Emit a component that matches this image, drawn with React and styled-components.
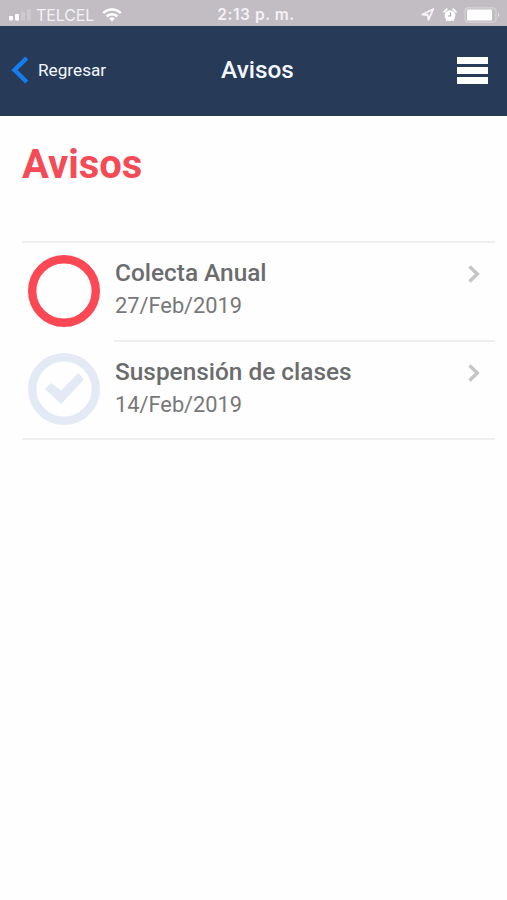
import styled, { createGlobalStyle } from "styled-components";

const GlobalStyle = createGlobalStyle`
  * {
    box-sizing: border-box;
  }
  body {
    margin: 0;
    background-color: #fefefe;
    font-family: Roboto, sans-serif;
  }
  svg {
    display: block;
    flex-shrink: 0;
  }
`;

const Screen = styled.div`
  min-height: 900px;
  background-color: #fefefe;
`;
const StatusBar = styled.div`
  height: 26px;
  padding: 3px 7px 0 9px;
  display: grid;
  grid-template-columns: 1fr auto 1fr;
  align-items: center;
  background-color: #c1bdc3;
  color: #f3f1f5;
  font-family: Inter, sans-serif;
`;
const StatusGroup = styled.div`
  display: flex;
  align-items: center;
  justify-content: ${(props) => (props.$end ? "flex-end" : "flex-start")};
`;
const Carrier = styled.span`
  margin: 0 8px 0 4px;
  font-size: 16px;
  line-height: 20px;
  letter-spacing: -0.1px;
`;
const Clock = styled.span`
  margin-left: 3px;
  font-size: 15.5px;
  line-height: 20px;
  font-weight: 600;
  letter-spacing: 0.55px;
`;
const Header = styled.header`
  height: 90px;
  padding: 0 19px 2px 11px;
  display: grid;
  grid-template-columns: 1fr auto 1fr;
  align-items: center;
  background-color: #273b59;
  color: #f4f9ff;
`;
const BackButton = styled.button`
  padding: 0;
  border: 0;
  display: flex;
  align-items: center;
  gap: 9px;
  background: none;
  color: inherit;
  font-family: inherit;
  font-size: 17.2px;
`;
const HeaderTitle = styled.span`
  margin-left: 16px;
  padding-bottom: 2px;
  font-size: 24.4px;
  font-weight: 500;
`;
const MenuButton = styled.button`
  padding: 0;
  border: 0;
  justify-self: end;
  display: flex;
  flex-direction: column;
  gap: 3px;
  background: none;
`;
const MenuBar = styled.span`
  width: 31px;
  height: 7px;
  background-color: #fff;
`;
const Content = styled.main`
  padding: 25px 12px 0 22px;
`;
const Title = styled.h1`
  margin: 0 0 53px;
  font-size: 40px;
  line-height: 47px;
  font-weight: 700;
  color: #f54b57;
`;
const List = styled.ul`
  margin: 0;
  padding: 0;
  list-style: none;
  border-top: 2px solid #efeff0;
  border-bottom: 2px solid #efeff0;
`;
const Item = styled.li`
  display: flex;
  padding-left: 6px;
`;
const StatusIcon = styled.svg`
  margin: ${(props) => (props.$read ? "11px" : "12px")} 14px 0 0;
`;
const ItemBody = styled.div`
  flex: 1;
  height: ${(props) => (props.$last ? "96px" : "99px")};
  padding: 14px 15px 0 0;
  display: flex;
  justify-content: space-between;
  border-bottom: ${(props) => (props.$last ? "0" : "2px solid #efeff0")};
`;
const ItemTitle = styled.div`
  padding-left: 1px;
  font-size: 24.4px;
  line-height: 32px;
  font-weight: 500;
  color: #6b6c6e;
`;
const ItemDate = styled.div`
  padding: 1px 0 0 1px;
  font-size: 21.8px;
  line-height: 32px;
  color: #77787a;
`;
const Chevron = styled.svg`
  margin-top: 8px;
`;

const notices = [
  { title: "Colecta Anual", date: "27/Feb/2019", read: false },
  { title: "Suspensión de clases", date: "14/Feb/2019", read: true },
];

const Notice = ({ notice, last }) => {
  return (
    <Item>
      <StatusIcon $read={notice.read} width="72" height="72" viewBox="0 0 72 72" fill="none">
        <circle
          cx="36"
          cy="36"
          r="31.8"
          stroke={notice.read ? "#e3eaf6" : "#fb4854"}
          strokeWidth="8.4"
        />
        {notice.read && (
          <path d="M17 36 23 30 33 37.5 50.5 20 56 26.5 33 51Z" fill="#e3eaf6" />
        )}
      </StatusIcon>
      <ItemBody $last={last}>
        <div>
          <ItemTitle>{notice.title}</ItemTitle>
          <ItemDate>{notice.date}</ItemDate>
        </div>
        <Chevron width="13" height="18" viewBox="0 0 13 18" fill="none">
          <path d="M2.5 1.5 10.3 9 2.5 16.5" stroke="#c5c5c7" strokeWidth="3.4" />
        </Chevron>
      </ItemBody>
    </Item>
  );
};

const App = () => {
  return (
    <Screen>
      <GlobalStyle />
      <StatusBar>
        <StatusGroup>
          <svg width="23" height="12" viewBox="0 0 23 12" fill="#fff">
            <rect x="0" y="7" width="4" height="4.5" rx="1" />
            <rect x="6" y="5" width="4" height="6.5" rx="1" />
            <rect x="12" y="2.5" width="4" height="9" rx="1" opacity="0.2" />
            <rect x="18" y="0" width="4" height="11.5" rx="1" opacity="0.2" />
          </svg>
          <Carrier>TELCEL</Carrier>
          <svg width="20" height="14" viewBox="0 0 20 14" fill="none" stroke="#fff">
            <path d="M1.3 5.1a12.3 12.3 0 0 1 17.4 0" strokeWidth="2.7" />
            <path d="M4.6 8.5a7.6 7.6 0 0 1 10.8 0" strokeWidth="2.5" />
            <path d="M10 13.5 7.1 10.6a4.1 4.1 0 0 1 5.8 0Z" fill="#fff" stroke="none" />
          </svg>
        </StatusGroup>
        <Clock>2:13 p. m.</Clock>
        <StatusGroup $end>
          <svg width="14" height="13" viewBox="0 0 14 13" fill="none">
            <path
              d="M12.3 1 7.5 11.8 6.7 7 1.4 6.6Z"
              stroke="#f6f4f8"
              strokeWidth="1.8"
              strokeLinejoin="round"
            />
          </svg>
          <svg width="14" height="14" viewBox="0 0 14 14" fill="none" style={{ marginLeft: 8 }}>
            <circle cx="7" cy="7.6" r="5.4" fill="#fff" />
            <path d="M1 3.8 3.8 1.2M13 3.8 10.2 1.2" stroke="#fff" strokeWidth="1.7" strokeLinecap="round" />
            <path d="M3.2 12.8 4.2 11.5M10.8 12.8 9.8 11.5" stroke="#fff" strokeWidth="1.5" />
            <path d="M7.5 4.5V8H4.8" stroke="#aaa7ae" strokeWidth="1.2" />
          </svg>
          <svg width="36" height="16" viewBox="0 0 36 16" fill="none" style={{ marginLeft: 7 }}>
            <rect x="1" y="0.8" width="31" height="14.4" rx="3.5" stroke="#d6d3d8" strokeWidth="1.2" />
            <rect x="3" y="2.5" width="25" height="11" rx="1" fill="#fff" />
            <path d="M34 5.5c1.6 1 1.6 4 0 5Z" fill="#dfdce1" />
          </svg>
        </StatusGroup>
      </StatusBar>
      <Header>
        <BackButton>
          <svg width="18" height="28" viewBox="0 0 18 28" fill="none">
            <path d="M15.8 2 3.5 14 15.8 26" stroke="#147df0" strokeWidth="4.4" />
          </svg>
          Regresar
        </BackButton>
        <HeaderTitle>Avisos</HeaderTitle>
        <MenuButton aria-label="Menú">
          <MenuBar />
          <MenuBar />
          <MenuBar />
        </MenuButton>
      </Header>
      <Content>
        <Title>Avisos</Title>
        <List>
          {notices.map((notice, i) => (
            <Notice key={notice.title} notice={notice} last={i === notices.length - 1} />
          ))}
        </List>
      </Content>
    </Screen>
  );
};

export default App;
